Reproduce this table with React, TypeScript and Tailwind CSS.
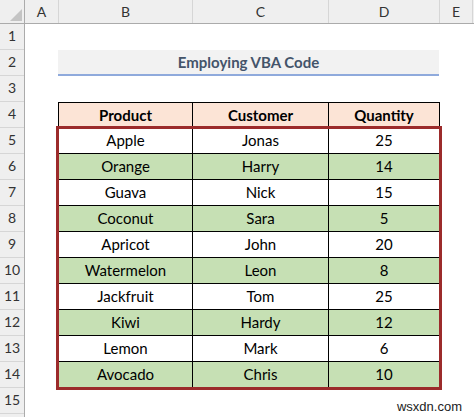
const columns = [
  { label: "A", width: "w-[34px]" },
  { label: "B", width: "w-[134px]" },
  { label: "C", width: "w-[136px]" },
  { label: "D", width: "w-[111px]" },
  { label: "E", width: "w-[33px]" },
];

const rows = [
  ["Apple", "Jonas", "25"],
  ["Orange", "Harry", "14"],
  ["Guava", "Nick", "15"],
  ["Coconut", "Sara", "5"],
  ["Apricot", "John", "20"],
  ["Watermelon", "Leon", "8"],
  ["Jackfruit", "Tom", "25"],
  ["Kiwi", "Hardy", "12"],
  ["Lemon", "Mark", "6"],
  ["Avocado", "Chris", "10"],
];

function Cell({ children, width, first, className = "" }: { children: React.ReactNode; width: string; first?: boolean; className?: string }) {
  return (
    <div
      className={`${width} h-[26px] flex items-center justify-center border-r border-b border-black ${first ? "border-l" : ""} ${className}`}
    >
      {children}
    </div>
  );
}

export default function App() {
  return (
    <div className="relative flex w-[474px] h-[417px] overflow-hidden bg-white font-['Lato',sans-serif] text-black">
      {/* row headers */}
      <div className="flex flex-col w-[25px] shrink-0 bg-[#efefef] border-r border-[#ababab]">
        <div className="h-[24px] shrink-0 border-b border-[#ababab] relative">
          <svg width="24" height="24" viewBox="0 0 24 24" className="absolute left-0 top-0">
            <polygon points="22,9 22,21 10,21" fill="#c4c4c4" />
          </svg>
        </div>
        {Array.from({ length: 15 }, (_, i) => (
          <div
            key={i}
            className="h-[26px] shrink-0 flex items-end justify-center pb-[3px] border-b border-[#d6d6d6] text-[14px] text-[#333]"
          >
            {i + 1}
          </div>
        ))}
        <div className="h-[26px] shrink-0" />
      </div>

      <div className="flex flex-col flex-1">
        {/* column headers */}
        <div className="flex h-[24px] shrink-0 bg-[#efefef] border-b border-[#ababab]">
          {columns.map((c) => (
            <div
              key={c.label}
              className={`${c.width} shrink-0 flex items-center justify-center border-r border-[#d6d6d6] text-[14px] text-[#333]`}
            >
              {c.label}
            </div>
          ))}
          <div className="flex-1" />
        </div>

        <div className="h-[26px] shrink-0" />

        <div className="h-[26px] shrink-0 flex">
          <div className="w-[33px] shrink-0" />
          <div className="w-[381px] flex items-center justify-center bg-[#f2f2f2] border-b-2 border-[#8faadc] text-[15px] font-bold text-[#44546a]">
            Employing VBA Code
          </div>
        </div>

        <div className="h-[26px] shrink-0" />

        <div className="flex flex-col w-[382px] ml-[33px] text-[15px]">
          <div className="flex bg-[#fce4d6] font-bold">
            <Cell width="w-[135px]" first className="border-t">Product</Cell>
            <Cell width="w-[136px]" className="border-t">Customer</Cell>
            <Cell width="w-[111px]" className="border-t">Quantity</Cell>
          </div>
          <div className="flex flex-col outline-[3px] outline-solid outline-[#9c2b2b] -outline-offset-1">
            {rows.map((r, i) => (
              <div key={r[0]} className={`flex ${i % 2 === 1 ? "bg-[#c6e0b4]" : "bg-white"}`}>
                <Cell width="w-[135px]" first>{r[0]}</Cell>
                <Cell width="w-[136px]">{r[1]}</Cell>
                <Cell width="w-[111px]">{r[2]}</Cell>
              </div>
            ))}
          </div>
        </div>
      </div>

      <div className="absolute right-[12px] bottom-[1px] font-['Liberation_Sans',sans-serif] text-[13px] text-[#222]">
        wsxdn.com
      </div>
    </div>
  );
}
